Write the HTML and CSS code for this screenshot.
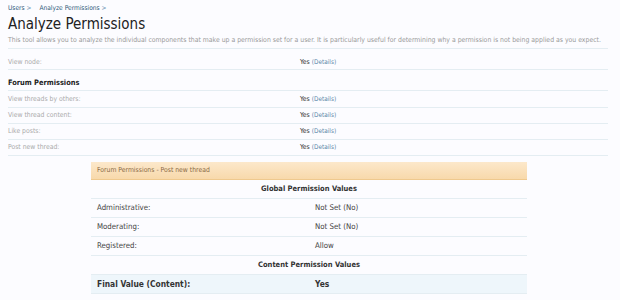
FILE: index.html
```html
<!DOCTYPE html>
<html>
<head>
    <meta charset="utf-8">
    <title>Analyze Permissions</title>
    <link rel="stylesheet" href="styles.css">
</head>
<body>
    <div class="breadcrumb">
        <a href="#">Users</a> &gt;
        <a href="#" class="crumb">Analyze Permissions</a> &gt;
    </div>
    <h1>Analyze Permissions</h1>
    <p class="explain">This tool allows you to analyze the individual components that make up a permission set for a user. It is particularly useful for determining why a permission is not being applied as you expect.</p>

    <div class="permRow node">
        <div class="label">View node:</div>
        <div class="value">Yes <a href="#">(Details)</a></div>
    </div>

    <h3 class="groupTitle">Forum Permissions</h3>
    <div class="permRow first">
        <div class="label">View threads by others:</div>
        <div class="value">Yes <a href="#">(Details)</a></div>
    </div>
    <div class="permRow">
        <div class="label">View thread content:</div>
        <div class="value">Yes <a href="#">(Details)</a></div>
    </div>
    <div class="permRow">
        <div class="label">Like posts:</div>
        <div class="value">Yes <a href="#">(Details)</a></div>
    </div>
    <div class="permRow">
        <div class="label">Post new thread:</div>
        <div class="value">Yes <a href="#">(Details)</a></div>
    </div>

    <div class="detailBox">
        <div class="detailHead">Forum Permissions - Post new thread</div>
        <div class="detailSection">Global Permission Values</div>
        <div class="detailRow">
            <div class="dLabel">Administrative:</div>
            <div class="dValue">Not Set (No)</div>
        </div>
        <div class="detailRow">
            <div class="dLabel">Moderating:</div>
            <div class="dValue">Not Set (No)</div>
        </div>
        <div class="detailRow">
            <div class="dLabel">Registered:</div>
            <div class="dValue">Allow</div>
        </div>
        <div class="detailSection">Content Permission Values</div>
        <div class="detailRow final">
            <div class="dLabel">Final Value (Content):</div>
            <div class="dValue">Yes</div>
        </div>
    </div>
</body>
</html>
```

FILE: styles.css
```css
body {
    margin: 0;
    padding: 3px 12px 0 8px;
    background-color: #fcfcff;
    font-family: "DejaVu Sans Condensed", "DejaVu Sans", sans-serif;
    font-stretch: condensed;
    color: #333;
}
a {
    text-decoration: none;
}
.breadcrumb {
    font-size: 6.6px;
    color: #6a8fb0;
    height: 10px;
    line-height: 10px;
}
.breadcrumb a {
    color: #2f5a7a;
}
.breadcrumb .crumb {
    margin-left: 6px;
}
h1 {
    margin: 0;
    font-size: 15px;
    font-weight: normal;
    color: #222;
    height: 22px;
    line-height: 22px;
}
.explain {
    margin: 0;
    font-size: 6.85px;
    color: #999;
    line-height: 11px;
    padding-bottom: 2px;
    border-bottom: 1px solid #e4edf2;
}
.permRow {
    display: flex;
    height: 15px;
    line-height: 15px;
    font-size: 6.8px;
    border-bottom: 1px solid #e4edf2;
}
.permRow.node {
    margin-top: 7px;
    height: 13px;
    line-height: 13px;
}
.permRow.first {
    height: 16px;
    line-height: 16px;
}
.permRow .label {
    width: 292px;
    color: #aaa;
}
.permRow .value {
    color: #333;
}
.permRow .value a {
    color: #5b87a8;
    font-size: 6.4px;
}
.groupTitle {
    margin: 6px 0 0 0;
    font-size: 7.4px;
    font-weight: bold;
    color: #222;
    height: 14px;
    line-height: 14px;
    border-bottom: 1px solid #e4edf2;
}
.detailBox {
    width: 436px;
    margin: 6px 0 0 83px;
    font-size: 7.8px;
    color: #444;
}
.detailHead {
    height: 17px;
    line-height: 17px;
    padding-left: 6px;
    font-size: 6.8px;
    color: #8a6a45;
    background: linear-gradient(#fce8cb, #f8d9ab);
    border-bottom: 1px solid #efc98e;
}
.detailSection {
    height: 18px;
    line-height: 18px;
    text-align: center;
    font-weight: bold;
    font-size: 7.5px;
    color: #333;
    border-bottom: 1px solid #e4edf2;
}
.detailRow {
    display: flex;
    height: 18px;
    line-height: 18px;
    border-bottom: 1px solid #e4edf2;
}
.dLabel {
    width: 212px;
    padding-left: 6px;
}
.dValue {
    padding-left: 6px;
}
.detailRow.final {
    background-color: #eef6fb;
    font-weight: bold;
    font-size: 8.4px;
    color: #333;
}
```
